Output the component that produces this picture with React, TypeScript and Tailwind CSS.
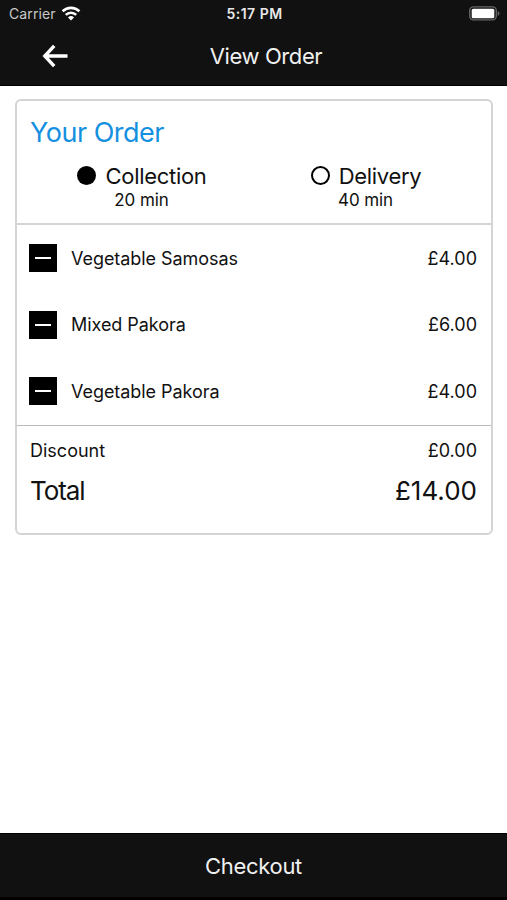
const items = [
  { id: 1, name: "Vegetable Samosas", price: "£4.00" },
  { id: 2, name: "Mixed Pakora", price: "£6.00" },
  { id: 3, name: "Vegetable Pakora", price: "£4.00" },
];

function StatusBar() {
  return (
    <div className="flex h-[27px] items-center pl-[9px] pr-[7px] text-[#e8e8e8]">
      <div className="flex flex-1 items-center gap-[5px]">
        <span className="text-[14px] leading-none tracking-[0.1px] text-[#c8c8c8]">Carrier</span>
        <svg width="20" height="15" viewBox="0 0 20 15" fill="none" stroke="#fff" strokeWidth="2.6">
          <path d="M1.6 5.3a12 12 0 0 1 16.8 0" />
          <path d="M4.8 8.9a7.4 7.4 0 0 1 10.4 0" />
          <path d="M10 14.5l-3-3a4.3 4.3 0 0 1 6 0z" fill="#fff" stroke="none" />
        </svg>
      </div>
      <span className="pt-px text-[14px] font-semibold leading-none tracking-[0.5px]">5:17 PM</span>
      <div className="flex flex-1 justify-end">
        <svg width="31" height="15" viewBox="0 0 31 15">
          <rect x="0.7" y="0.9" width="26.6" height="13" rx="3.8" fill="#111" stroke="#666" strokeWidth="1.4" />
          <rect x="2.7" y="2.8" width="22.6" height="9.4" rx="1.5" fill="#fff" />
          <path d="M28.7 5v5c1.1-.4 1.8-1.4 1.8-2.5S29.8 5.4 28.7 5z" fill="#666" />
        </svg>
      </div>
    </div>
  );
}

function Header() {
  return (
    <div className="flex h-[59px] items-center border-b border-black pl-[42px] pr-[17px]">
      <button type="button" aria-label="Back" className="flex-1">
        <svg width="27" height="24" viewBox="0 0 27 24" fill="none" stroke="#fff" strokeWidth="3.4">
          <path d="M12.2 1.8L2.8 12l9.4 10.2M2.8 12H25.5" />
        </svg>
      </button>
      <h1 className="text-[22px] leading-none tracking-[-0.4px] text-[#f0f0f0]">View Order</h1>
      <div className="flex-1" />
    </div>
  );
}

type OptionProps = { label: string; time: string; selected?: boolean };

function Option({ label, time, selected }: OptionProps) {
  return (
    <div className="flex w-[224px] flex-col items-center">
      <div className="flex h-[25px] items-center gap-[9px] pl-px">
        <span
          className={
            selected
              ? "h-[19px] w-[19px] rounded-full bg-black"
              : "h-[19px] w-[19px] rounded-full border-2 border-black"
          }
        />
        <span className="text-[22px] leading-none tracking-[-0.3px]">{label}</span>
      </div>
      <span className="text-[17px] leading-[24px] tracking-[-0.1px]">{time}</span>
    </div>
  );
}

export default function App() {
  return (
    <div className="flex h-[900px] w-[507px] flex-col overflow-hidden bg-white font-['Inter',sans-serif] text-[#111]">
      <header className="h-[86px] shrink-0 bg-[#111]">
        <StatusBar />
        <Header />
      </header>

      <main className="flex-1 pl-[15px] pr-[14px] pt-[13px]">
        <div className="h-[436px] rounded-[6px] border-2 border-[#d4d4d4]">
          <section className="h-[124px] border-b-2 border-[#d4d4d4] pl-[13px] pr-[14px] pt-[15px]">
            <h2 className="text-[27px] leading-[34px] tracking-[-0.5px] text-[#1590e0]">Your Order</h2>
            <div className="mt-[13px] flex gap-px">
              <Option label="Collection" time="20 min" selected />
              <Option label="Delivery" time="40 min" />
            </div>
          </section>

          <section className="h-[201px] border-b border-[#bbb] pl-[12px] pr-[14px]">
            {items.map((item) => (
              <div key={item.id} className="flex h-[66.5px] items-center text-[18px]">
                <button
                  type="button"
                  aria-label="Remove"
                  className="flex h-[28px] w-[28px] items-center justify-center bg-black"
                >
                  <span className="h-[2px] w-4 bg-white" />
                </button>
                <span className="ml-[14px] flex-1 tracking-[-0.05px]">{item.name}</span>
                <span>{item.price}</span>
              </div>
            ))}
          </section>

          <section className="pl-[13px] pr-[14px] pt-[9px]">
            <div className="flex h-[31px] items-center justify-between text-[18px]">
              <span>Discount</span>
              <span>£0.00</span>
            </div>
            <div className="flex h-[48px] items-center justify-between text-[26px]">
              <span className="tracking-[-1.1px]">Total</span>
              <span>£14.00</span>
            </div>
          </section>
        </div>
      </main>

      <footer className="h-[67px] shrink-0 border-y border-b-[3px] border-black bg-[#111]">
        <button type="button" className="h-full w-full pt-[2px] text-[22px] tracking-[-0.3px] text-[#f0f0f0]">
          Checkout
        </button>
      </footer>
    </div>
  );
}
